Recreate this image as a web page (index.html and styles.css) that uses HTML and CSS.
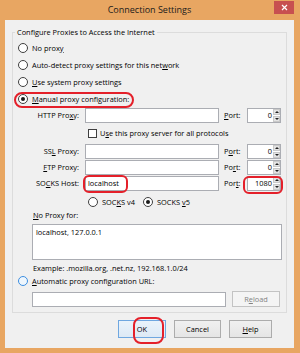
FILE: index.html
```html
<!DOCTYPE html>
<html>
<head>
<meta charset="utf-8">
<link rel="stylesheet" href="styles.css">
</head>
<body>
<div class="window">
  <div class="titlebar">
    <span class="title">Connection Settings</span>
    <span class="close"><svg width="7" height="7" viewBox="0 0 7 7"><path d="M1 1L6 6M6 1L1 6" stroke="#fff" stroke-width="1.2"/></svg></span>
  </div>
  <div class="client">
    <fieldset class="group">
      <legend>Configure Proxies to Access the Internet</legend>
      <div class="opts">
        <div class="opt"><span class="radio"></span><span>No prox<u>y</u></span></div>
        <div class="opt"><span class="radio"></span><span>Auto-detect proxy settings for this net<u>w</u>ork</span></div>
        <div class="opt"><span class="radio"></span><span><u>U</u>se system proxy settings</span></div>
        <div class="opt"><span class="radio on"></span><span><u>M</u>anual proxy configuration:</span></div>
      </div>
      <div class="proxies">
        <span class="lbl">HTTP Pro<u>x</u>y:</span>
        <span class="field"></span>
        <span class="plbl"><u>P</u>ort:</span>
        <span class="port"><span class="pval">0</span><span class="spin"><span class="up"></span><span class="down"></span></span></span>

        <div class="check"><span class="box"></span><span>U<u>s</u>e this proxy server for all protocols</span></div>

        <span class="lbl">SS<u>L</u> Proxy:</span>
        <span class="field"></span>
        <span class="plbl">P<u>o</u>rt:</span>
        <span class="port"><span class="pval">0</span><span class="spin"><span class="up"></span><span class="down"></span></span></span>

        <span class="lbl"><u>F</u>TP Proxy:</span>
        <span class="field"></span>
        <span class="plbl">Po<u>r</u>t:</span>
        <span class="port"><span class="pval">0</span><span class="spin"><span class="up"></span><span class="down"></span></span></span>

        <span class="lbl">SO<u>C</u>KS Host:</span>
        <span class="field">localhost</span>
        <span class="plbl">Por<u>t</u>:</span>
        <span class="port"><span class="pval">1080</span><span class="spin"><span class="up"></span><span class="down"></span></span></span>

        <div class="socks">
          <span class="sopt"><span class="radio"></span><span>SOC<u>K</u>S v4</span></span>
          <span class="sopt"><span class="radio on"></span><span>SOCKS <u>v</u>5</span></span>
        </div>
      </div>
      <div class="noproxy">
        <span class="nplbl"><u>N</u>o Proxy for:</span>
        <div class="textarea">localhost, 127.0.0.1</div>
        <span class="example">Example: .mozilla.org, .net.nz, 192.168.1.0/24</span>
      </div>
      <div class="opt auto"><span class="radio hover"></span><span><u>A</u>utomatic proxy configuration URL:</span></div>
      <div class="urlrow">
        <span class="field url"></span>
        <span class="btn disabled">R<u>e</u>load</span>
      </div>
    </fieldset>
    <div class="buttons">
      <span class="btn default ok">OK</span>
      <span class="btn cancel">Cancel</span>
      <span class="btn help"><u>H</u>elp</span>
    </div>
  </div>
  <div class="ring r-manual"></div>
  <div class="ring r-host"></div>
  <div class="ring r-port"></div>
  <div class="ring r-ok"></div>
</div>
</body>
</html>
```
FILE: styles.css
```css
* { box-sizing: border-box; }
html, body { margin: 0; padding: 0; }
body {
  width: 300px;
  height: 353px;
  overflow: hidden;
  font-family: "Open Sans", "Noto Sans", sans-serif;
  font-size: 7.4px;
  color: #000;
}
u { text-decoration-thickness: 1px; text-underline-offset: 1px; }

.window {
  position: relative;
  width: 300px;
  height: 353px;
  background: #e8a662;
  display: flex;
  flex-direction: column;
  padding: 0 6px 5px 5px;
}
.titlebar {
  height: 20px;
  flex: none;
  display: grid;
  grid-template-columns: 1fr auto 1fr;
  align-items: start;
}
.title {
  grid-column: 2;
  font-size: 9px;
  line-height: 20px;
  color: #1a1a1a;
}
.close {
  grid-column: 3;
  justify-self: end;
  margin-top: 1px;
  width: 20px;
  height: 13px;
  background: #c75050;
  display: flex;
  align-items: center;
  justify-content: center;
}

.client {
  flex: 1;
  background: #f0f0f0;
  padding: 6px 7px 0 7px;
  display: flex;
  flex-direction: column;
}
.group {
  margin: 0;
  padding: 0 3px 5px 0;
  border: 1px solid #dcdcdc;
  min-width: 0;
}
.group legend {
  margin-left: 2px;
  padding: 0 2px;
  line-height: 12px;
}
.opts { padding-top: 1px; }
.opt {
  display: flex;
  align-items: center;
  height: 17px;
  padding-left: 5px;
  gap: 4px;
}
.radio {
  width: 10px;
  height: 10px;
  flex: none;
  border: 1px solid #3f3f3f;
  border-radius: 50%;
  background: #fff;
  display: flex;
  align-items: center;
  justify-content: center;
}
.radio.on::after {
  content: "";
  width: 4px;
  height: 4px;
  border-radius: 50%;
  background: #1a1a1a;
}
.radio.hover { border-color: #3d8ee0; background: #eef6fd; }

.proxies {
  display: grid;
  grid-template-columns: 72px 139px 23px 34px;
  grid-template-rows: 16px 20px 16px 16px 16px;
  align-items: center;
}
.lbl { text-align: right; padding-right: 6px; white-space: nowrap; }
.field {
  height: 15px;
  width: 134px;
  background: #fff;
  border: 1px solid #abadb3;
  padding-left: 2px;
  line-height: 13px;
}
.plbl { white-space: nowrap; }
.port {
  height: 15px;
  display: flex;
  background: #fff;
  border: 1px solid #abadb3;
}
.pval { flex: 1; text-align: right; padding-right: 1px; line-height: 13px; }
.spin {
  width: 7px;
  display: flex;
  flex-direction: column;
  gap: 1px;
}
.spin span {
  flex: 1;
  background: #e3e3e3;
  border: 1px solid #c9c9c9;
  display: flex;
  align-items: center;
  justify-content: center;
}
.spin .up::after {
  content: "";
  border-left: 2px solid transparent;
  border-right: 2px solid transparent;
  border-bottom: 2px solid #222;
}
.spin .down::after {
  content: "";
  border-left: 2px solid transparent;
  border-right: 2px solid transparent;
  border-top: 2px solid #222;
}
.check {
  grid-column: 2 / 5;
  display: flex;
  align-items: center;
  gap: 3px;
  padding-left: 3px;
}
.box {
  width: 9px;
  height: 9px;
  border: 1px solid #3f3f3f;
  background: #fff;
}
.socks {
  grid-column: 2 / 5;
  display: flex;
  align-items: center;
  height: 16px;
  margin-top: 3px;
  padding-left: 3px;
}
.sopt { display: flex; align-items: center; gap: 4px; }
.sopt:first-child { width: 55px; }

.noproxy {
  display: flex;
  flex-direction: column;
  padding-left: 19px;
}
.nplbl { line-height: 11px; padding-left: 1px; }
.textarea {
  margin-top: 3px;
  height: 36px;
  width: 250px;
  background: #fff;
  border: 1px solid #abadb3;
  padding: 0 3px;
  line-height: 14px;
}
.example { margin-top: 2px; line-height: 12px; padding-left: 1px; }
.auto { height: 14px; }
.urlrow {
  display: flex;
  align-items: center;
  gap: 6px;
  margin-top: 3px;
  padding-left: 19px;
  height: 16px;
}
.url { width: 194px; }
.btn {
  display: flex;
  align-items: center;
  justify-content: center;
  height: 16px;
  width: 48px;
  border: 1px solid #acacac;
  background: linear-gradient(#f0f0f0, #e5e5e5);
}
.btn.disabled {
  color: #838383;
  border-color: #c3c3c3;
  background: #f4f4f4;
}
.buttons {
  display: flex;
  justify-content: flex-end;
  gap: 8px;
  margin-top: 7px;
  padding-right: 15px;
}
.buttons .btn { height: 18px; }
.ok { width: 48px; }
.cancel { width: 47px; }
.help { width: 43px; }
.btn.default { border-color: #6fa7e0; background: linear-gradient(#eaf3fb, #dde9f5); }

.ring {
  position: absolute;
  border: 2px solid #e4202a;
}
.r-manual { left: 14px; top: 92px; width: 120px; height: 16px; border-radius: 8px; }
.r-host { left: 83px; top: 175px; width: 45px; height: 18px; border-radius: 6px; }
.r-port { left: 243px; top: 176px; width: 40px; height: 18px; border-radius: 6px; }
.r-ok { left: 133px; top: 317px; width: 31px; height: 27px; border-radius: 8px; }
```
